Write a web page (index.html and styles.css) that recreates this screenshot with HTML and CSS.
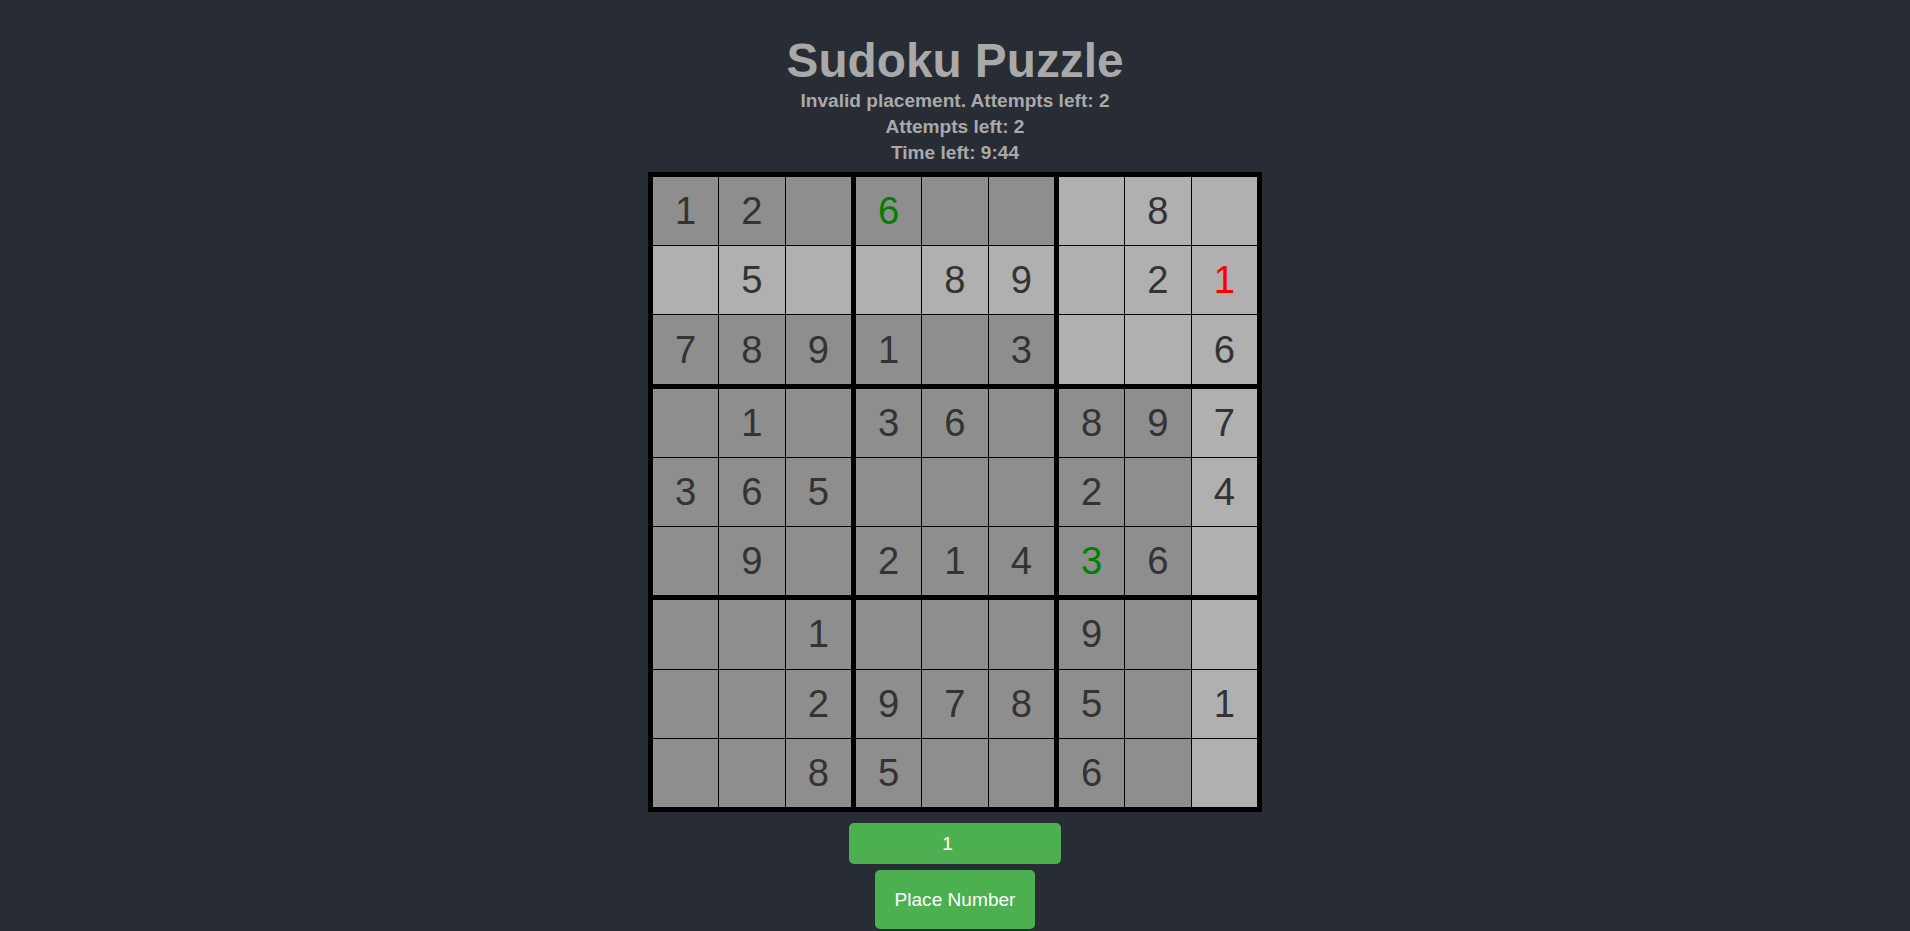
FILE: index.html
```html
<!DOCTYPE html>
<html lang="en">
<head>
<meta charset="utf-8">
<title>Sudoku Puzzle</title>
<link rel="stylesheet" href="styles.css">
</head>
<body>
<div class="app">
  <h1 class="title">Sudoku Puzzle</h1>
  <div class="status">Invalid placement. Attempts left: 2</div>
  <div class="status">Attempts left: 2</div>
  <div class="status">Time left: 9:44</div>
  <div class="board">
    <div class="box">
      <div class="cell">1</div><div class="cell">2</div><div class="cell"></div>
      <div class="cell hl"></div><div class="cell hl">5</div><div class="cell hl"></div>
      <div class="cell">7</div><div class="cell">8</div><div class="cell">9</div>
    </div>
    <div class="box">
      <div class="cell ok">6</div><div class="cell"></div><div class="cell"></div>
      <div class="cell hl"></div><div class="cell hl">8</div><div class="cell hl">9</div>
      <div class="cell">1</div><div class="cell"></div><div class="cell">3</div>
    </div>
    <div class="box">
      <div class="cell hl"></div><div class="cell hl">8</div><div class="cell hl"></div>
      <div class="cell hl"></div><div class="cell hl">2</div><div class="cell hl bad">1</div>
      <div class="cell hl"></div><div class="cell hl"></div><div class="cell hl">6</div>
    </div>
    <div class="box">
      <div class="cell"></div><div class="cell">1</div><div class="cell"></div>
      <div class="cell">3</div><div class="cell">6</div><div class="cell">5</div>
      <div class="cell"></div><div class="cell">9</div><div class="cell"></div>
    </div>
    <div class="box">
      <div class="cell">3</div><div class="cell">6</div><div class="cell"></div>
      <div class="cell"></div><div class="cell"></div><div class="cell"></div>
      <div class="cell">2</div><div class="cell">1</div><div class="cell">4</div>
    </div>
    <div class="box">
      <div class="cell">8</div><div class="cell">9</div><div class="cell hl">7</div>
      <div class="cell">2</div><div class="cell"></div><div class="cell hl">4</div>
      <div class="cell ok">3</div><div class="cell">6</div><div class="cell hl"></div>
    </div>
    <div class="box">
      <div class="cell"></div><div class="cell"></div><div class="cell">1</div>
      <div class="cell"></div><div class="cell"></div><div class="cell">2</div>
      <div class="cell"></div><div class="cell"></div><div class="cell">8</div>
    </div>
    <div class="box">
      <div class="cell"></div><div class="cell"></div><div class="cell"></div>
      <div class="cell">9</div><div class="cell">7</div><div class="cell">8</div>
      <div class="cell">5</div><div class="cell"></div><div class="cell"></div>
    </div>
    <div class="box">
      <div class="cell">9</div><div class="cell"></div><div class="cell hl"></div>
      <div class="cell">5</div><div class="cell"></div><div class="cell hl">1</div>
      <div class="cell">6</div><div class="cell"></div><div class="cell hl"></div>
    </div>
  </div>
  <input class="num-input" type="number" min="1" max="9" value="1">
  <button class="place-btn" type="button">Place Number</button>
</div>
</body>
</html>
```
FILE: styles.css
```css
html, body {
  margin: 0;
  padding: 0;
  background: #282c34;
}
body {
  font-family: "Liberation Sans", Arial, sans-serif;
  min-height: 931px;
}
.app {
  display: flex;
  flex-direction: column;
  align-items: center;
  padding-top: 33px;
}
.title {
  margin: 0;
  font-size: 47.75px;
  line-height: 55px;
  font-weight: bold;
  color: #a9a9a9;
}
.status {
  font-size: 19.1px;
  line-height: 26px;
  font-weight: bold;
  color: #a9a9a9;
}
.board {
  margin-top: 6px;
  width: 604px;
  height: 630px;
  border: 5px solid #000;
  background: #000;
  display: grid;
  grid-template-columns: repeat(3, 1fr);
  grid-template-rows: repeat(3, 1fr);
  gap: 5px;
}
.box {
  display: grid;
  grid-template-columns: repeat(3, 1fr);
  grid-template-rows: repeat(3, 1fr);
  gap: 1px;
}
.cell {
  background: #8e8e8e;
  color: #333;
  font-size: 38.2px;
  display: flex;
  align-items: center;
  justify-content: center;
}
.cell.hl {
  background: #b0b0b0;
}
.cell.ok {
  color: #008000;
}
.cell.bad {
  color: #ff0000;
}
.num-input {
  margin-top: 11px;
  width: 212px;
  height: 41px;
  box-sizing: border-box;
  border: none;
  border-radius: 5px;
  background: #4caf50;
  color: #fff;
  text-align: center;
  font-family: "Liberation Sans", Arial, sans-serif;
  font-size: 19.1px;
  padding: 0;
  outline: none;
}
.place-btn {
  margin-top: 6px;
  width: 160px;
  height: 59px;
  border: none;
  border-radius: 5px;
  background: #4caf50;
  color: #fff;
  font-family: "Liberation Sans", Arial, sans-serif;
  font-size: 19.1px;
  padding: 0;
  cursor: pointer;
}
```
